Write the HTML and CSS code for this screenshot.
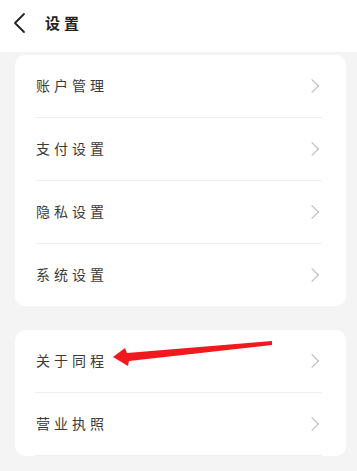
FILE: index.html
```html
<!DOCTYPE html>
<html>
<head>
<meta charset="UTF-8">
<title>设置</title>
<link rel="stylesheet" href="styles.css">
</head>
<body>
   <div class="header">
      <svg class="back" width="16" height="22" viewBox="0 0 16 22">
         <path d="M12 2 L3 11 L12 20" fill="none" stroke="#222" stroke-width="1.8" stroke-linecap="round" stroke-linejoin="round"/>
      </svg>
      <span class="title">设置</span>
   </div>

   <div class="card">
      <div class="item"><span>账户管理</span><i class="arrow"></i></div>
      <div class="item"><span>支付设置</span><i class="arrow"></i></div>
      <div class="item"><span>隐私设置</span><i class="arrow"></i></div>
      <div class="item last"><span>系统设置</span><i class="arrow"></i></div>
   </div>

   <div class="card second">
      <div class="item"><span>关于同程</span><i class="arrow"></i></div>
      <div class="item"><span>营业执照</span><i class="arrow"></i></div>
      <svg class="mark" width="357" height="40" viewBox="0 0 357 40">
         <polygon points="113,28 125,19 127,24 272,12 272,16 129,32 128,37" fill="#f0191e"/>
      </svg>
   </div>
</body>
</html>
```

FILE: styles.css
```css
html, body {
   margin: 0;
   padding: 0;
}

body {
   background-color: #f4f4f4;
   font-family: "Noto Sans CJK SC", "Noto Sans", sans-serif;
   color: #333;
   width: 357px;
   height: 471px;
   overflow: hidden;
   position: relative;
}

.header {
   height: 52px;
   background-color: #fff;
   display: flex;
   align-items: center;
   padding-left: 12px;
   box-sizing: border-box;
}

.back {
   margin-top: -7px;
}

.title {
   margin-left: 17px;
   margin-top: -8px;
   font-size: 15px;
   font-weight: bold;
   letter-spacing: 4px;
   color: #222;
}

.card {
   background-color: #fff;
   margin: 3px 11px 0 15px;
   border-radius: 10px;
   padding: 0 24px 0 20px;
}

.card.second {
   margin-top: 24px;
   position: relative;
}

.item {
   height: 62px;
   display: flex;
   align-items: center;
   justify-content: space-between;
   border-bottom: 1px solid #eeeeee;
   font-size: 14px;
   letter-spacing: 4px;
   color: #3a3a3a;
}

.item span {
   margin-left: 1px;
   margin-top: -2px;
}

.item.last {
   border-bottom: none;
}

.arrow {
   width: 9px;
   height: 9px;
   border-top: 1.3px solid #b8b8b8;
   border-right: 1.3px solid #b8b8b8;
   transform: rotate(45deg);
   margin-right: 5px;
}

.mark {
   position: absolute;
   left: -15px;
   top: -1px;
}
```
